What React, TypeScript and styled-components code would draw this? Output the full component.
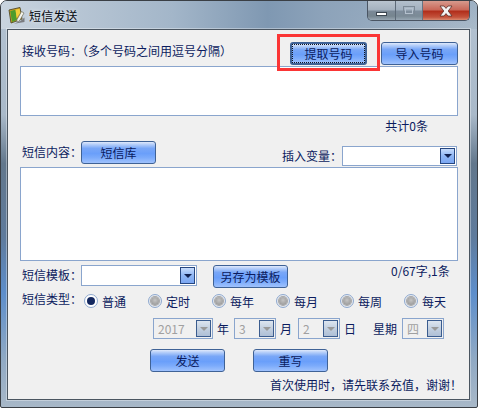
import React from "react";
import styled, { createGlobalStyle } from "styled-components";

const GlobalStyle = createGlobalStyle`
  html, body {
    margin: 0;
    padding: 0;
    background: #fff;
  }
  * {
    box-sizing: border-box;
  }
`;

const Frame = styled.div`
  width: 478px;
  height: 408px;
  display: flex;
  flex-direction: column;
  border: 1px solid #3a3f45;
  border-radius: 7px 7px 2px 2px;
  overflow: hidden;
  font-family: "Noto Sans CJK SC", "Liberation Sans", sans-serif;
  font-size: 12px;
  line-height: 12px;
  color: #0b1b5e;
  background: linear-gradient(
    180deg,
    #b4c3d2 0%,
    #a9b9c9 28%,
    #62778c 40%,
    #5f7b9c 58%,
    #5d8ecb 72%,
    #8fa9c4 88%,
    #a8b8c8 100%
  );
`;

const TitleBar = styled.div`
  height: 28px;
  flex: none;
  display: flex;
  align-items: flex-start;
  padding: 6px 0 0 7px;
  background: linear-gradient(
      90deg,
      #c9d4df 0%,
      #b9c7d5 14%,
      #a3b6c9 36%,
      #7f98b2 56%,
      #8da3ba 68%,
      #82998f00 100%
    ),
    linear-gradient(180deg, #9db0c3 0%, #a9bac9 100%);
`;

const AppIcon = styled.svg`
  width: 17px;
  height: 17px;
  flex: none;
`;

const Title = styled.div`
  margin: 3px 0 0 4px;
  color: #05080f;
  letter-spacing: 0.2px;
  text-shadow: 0 0 4px rgba(255, 255, 255, 0.75);
`;

const Caption = styled.div`
  display: flex;
  height: 20px;
  margin: -6px 7px 0 auto;
  border: 1px solid #4a5563;
  border-top: none;
  border-radius: 0 0 5px 5px;
  overflow: hidden;
`;

const CaptionButton = styled.div<{ $w: number; $close?: boolean; $dim?: boolean }>`
  width: ${({ $w }) => $w}px;
  display: flex;
  align-items: center;
  justify-content: center;
  border-right: 1px solid ${({ $close }) => ($close ? "transparent" : "#5d6a78")};
  opacity: ${({ $dim }) => ($dim ? 0.85 : 1)};
  background: ${({ $close }) =>
    $close
      ? "linear-gradient(180deg, #d79a8d 0%, #c9695a 45%, #b22f1c 55%, #c4533c 85%, #d98a70 100%)"
      : "linear-gradient(180deg, #b9c4cf 0%, #a5b2bf 45%, #7a8896 55%, #76858f 80%, #98a6b2 100%)"};
`;

const MinGlyph = styled.div`
  width: 11px;
  height: 4px;
  margin-top: 7px;
  background: #fff;
  border: 1px solid #3c4650;
`;

const MaxGlyph = styled.div`
  width: 12px;
  height: 10px;
  border: 1px solid #77838f;
  outline: 1px solid #b9c4cf;
  outline-offset: -3px;
`;

const Client = styled.div`
  position: relative;
  flex: 1;
  margin: 0 7px 7px 6px;
  border: 1px solid #4a5560;
  display: flex;
  flex-direction: column;
  padding: 12px 11px 0 12px;
  background: #f0f0f0;
  box-shadow: 0 0 0 1px rgba(255, 255, 255, 0.35);
`;

const Highlight = styled.div`
  position: absolute;
  left: 269px;
  top: 4px;
  width: 103px;
  height: 37px;
  border: 3px solid #fb3535;
`;

const Row = styled.div<{ $h: number; $mt?: number }>`
  display: flex;
  align-items: flex-start;
  flex: none;
  height: ${({ $h }) => $h}px;
  margin-top: ${({ $mt }) => $mt ?? 0}px;
`;

const Label = styled.div<{ $ml?: number; $mt?: number }>`
  flex: none;
  margin-left: ${({ $ml }) => $ml ?? 0}px;
  margin-top: ${({ $mt }) => $mt ?? 0}px;
  white-space: nowrap;
`;

const Push = styled.div`
  flex: 1;
`;

const Button = styled.div<{ $w?: number; $ml?: number; $focus?: boolean }>`
  position: relative;
  flex: none;
  width: ${({ $w }) => $w ?? 75}px;
  height: 23px;
  margin-left: ${({ $ml }) => $ml ?? 0}px;
  display: flex;
  align-items: center;
  justify-content: center;
  border: 1px solid #3f6296;
  border-radius: 3px;
  background: linear-gradient(
    180deg,
    #dfe9fb 0%,
    #b3cdf9 12%,
    #79a7f7 30%,
    #6a9ffa 55%,
    #7cabfb 75%,
    #9fc2fd 100%
  );
  ${({ $focus }) =>
    $focus &&
    `
    border: 2px solid #3f6296;
    &::after {
      content: "";
      position: absolute;
      inset: 0;
      border: 1px dotted #10141f;
    }
  `}
`;

const Field = styled.div<{ $h: number; $mt?: number }>`
  flex: none;
  height: ${({ $h }) => $h}px;
  margin-top: ${({ $mt }) => $mt ?? 0}px;
  background: #fff;
  border: 1px solid #8aa5cd;
`;

const CountLine = styled.div<{ $mt: number; $mr: number }>`
  flex: none;
  height: 12px;
  margin-top: ${({ $mt }) => $mt}px;
  margin-right: ${({ $mr }) => $mr}px;
  text-align: right;
  white-space: nowrap;
`;

const Select = styled.div<{ $w: number; $h: number; $ml?: number; $mt?: number; $off?: boolean }>`
  flex: none;
  display: flex;
  align-items: center;
  justify-content: space-between;
  width: ${({ $w }) => $w}px;
  height: ${({ $h }) => $h}px;
  margin-left: ${({ $ml }) => $ml ?? 0}px;
  margin-top: ${({ $mt }) => $mt ?? 0}px;
  padding: 0 1px 0 4px;
  background: ${({ $off }) => ($off ? "#f0f0f0" : "#fff")};
  color: #a0a0a0;
  border: 1px solid #8aa5cd;
`;

const Arrow = styled.div<{ $off?: boolean }>`
  flex: none;
  width: 15px;
  height: calc(100% - 2px);
  display: flex;
  align-items: center;
  justify-content: center;
  border: 1px solid ${({ $off }) => ($off ? "#3b5c8e" : "#26467f")};
  background: ${({ $off }) =>
    $off
      ? "linear-gradient(180deg, #dde5ef 0%, #c3d0e0 50%, #aebfd6 100%)"
      : "linear-gradient(180deg, #c7dcfb 0%, #8fb6f5 50%, #7ba7f2 100%)"};
  &::after {
    content: "";
    width: 0;
    height: 0;
    border-left: 4px solid transparent;
    border-right: 4px solid transparent;
    border-top: 4px solid ${({ $off }) => ($off ? "#9a9a9a" : "#10204f")};
  }
`;

const RadioGroup = styled.div`
  display: flex;
  margin-left: 2px;
`;

const Radio = styled.div`
  flex: none;
  width: 64px;
  display: flex;
  align-items: center;
  height: 14px;
  gap: 4px;
`;

const RadioText = styled.span`
  padding-top: 2px;
`;

const RadioDot = styled.div<{ $on?: boolean }>`
  flex: none;
  width: 14px;
  height: 14px;
  border-radius: 50%;
  border: 1px solid #8fa9cf;
  display: flex;
  align-items: center;
  justify-content: center;
  background: ${({ $on }) => ($on ? "#fff" : "#e4e8ee")};
  &::after {
    content: "";
    width: 8px;
    height: 8px;
    border-radius: 50%;
    background: ${({ $on }) =>
      $on ? "#14285f" : "radial-gradient(circle at 50% 40%, #c4c4c4, #8f8f8f)"};
    box-shadow: ${({ $on }) => ($on ? "none" : "0 0 0 1px #a8a8a8")};
  }
`;

const kinds = ["定时", "每年", "每月", "每周", "每天"];

// full-width punctuation, as the dialog shows it
const COLON = "\uFF1A";
const COMMA = "\uFF0C";

const BookIcon = () => (
  <AppIcon viewBox="0 0 17 17">
    <path d="M1 3 L12 0.5 L14 12 L3 16 Z" fill="#d9a21e" stroke="#4e4a2a" strokeWidth="0.9" />
    <path d="M2.2 4 L7.5 2.8 L9 13 L4 15 Z" fill="#4f9c2c" />
    <path d="M7.5 2.8 L11.6 1.8 L12.4 6 L8.6 11 Z" fill="#f2cf3a" />
    <path d="M9 12.5 L13.5 4.5 L16 6 L11.4 14 L8.8 15 Z" fill="#f4f4ec" stroke="#6b6b5c" strokeWidth="0.7" />
    <path d="M12.5 14 L16.5 10.5 L16.5 15 L6 16.8 Z" fill="#7a7c80" />
  </AppIcon>
);

export default function App() {
  return (
    <>
      <GlobalStyle />
      <Frame>
        <TitleBar>
          <BookIcon />
          <Title>短信发送</Title>
          <Caption>
            <CaptionButton $w={28}>
              <MinGlyph />
            </CaptionButton>
            <CaptionButton $w={27} $dim>
              <MaxGlyph />
            </CaptionButton>
            <CaptionButton $w={46} $close>
              <svg width="16" height="12" viewBox="0 0 16 12">
                <path
                  d="M2 1 H6 L8 3.4 L10 1 H14 L10.2 6 L14 11 H10 L8 8.6 L6 11 H2 L5.8 6 Z"
                  fill="#f4f4f4"
                  stroke="#59302a"
                  strokeWidth="0.8"
                />
              </svg>
            </CaptionButton>
          </Caption>
        </TitleBar>
        <Client>
          <Row $h={23}>
            <Label $ml={2} $mt={3}>
              {`接收号码${COLON}\uFF08多个号码之间用逗号分隔\uFF09`}
            </Label>
            <Push />
            <Button $w={77} $focus>
              提取号码
            </Button>
            <Button $w={77} $ml={14}>
              导入号码
            </Button>
          </Row>
          <Field $h={50} $mt={1} />
          <CountLine $mt={4} $mr={30}>
            共计0条
          </CountLine>
          <Row $h={26} $mt={9}>
            <Label $ml={2} $mt={5}>
              {`短信内容${COLON}`}
            </Label>
            <Button $ml={-1}>短信库</Button>
            <Label $ml={126} $mt={9}>
              {`插入变量${COLON}`}
            </Label>
            <Select $w={115} $h={20} $mt={5}>
              <span />
              <Arrow />
            </Select>
          </Row>
          <Field $h={94} />
          <Row $h={23} $mt={4}>
            <Label $ml={2} $mt={4}>
              {`短信模板${COLON}`}
            </Label>
            <Select $w={116} $h={21} $ml={-1}>
              <span />
              <Arrow />
            </Select>
            <Button $ml={16}>另存为模板</Button>
            <Label $ml={103}>0/67字,1条</Label>
          </Row>
          <Row $h={14} $mt={6}>
            <Label $ml={2} $mt={-1}>{`短信类型${COLON}`}</Label>
            <RadioGroup>
              <Radio>
                <RadioDot $on />
                <RadioText>普通</RadioText>
              </Radio>
              {kinds.map((kind) => (
                <Radio key={kind}>
                  <RadioDot />
                  <RadioText>{kind}</RadioText>
                </Radio>
              ))}
            </RadioGroup>
          </Row>
          <Row $h={21} $mt={10}>
            <Select $w={60} $h={21} $ml={133} $off>
              2017
              <Arrow $off />
            </Select>
            <Label $ml={4} $mt={5}>
              年
            </Label>
            <Select $w={42} $h={21} $ml={5} $off>
              3
              <Arrow $off />
            </Select>
            <Label $ml={4} $mt={5}>
              月
            </Label>
            <Select $w={42} $h={21} $ml={6} $off>
              2
              <Arrow $off />
            </Select>
            <Label $ml={4} $mt={5}>
              日
            </Label>
            <Label $ml={17} $mt={5}>
              星期
            </Label>
            <Select $w={42} $h={21} $ml={5} $off>
              四
              <Arrow $off />
            </Select>
          </Row>
          <Row $h={23} $mt={10}>
            <Button $ml={130}>发送</Button>
            <Button $ml={28}>重写</Button>
          </Row>
          <CountLine $mt={7} $mr={-4}>
            {`首次使用时${COMMA}请先联系充值${COMMA}谢谢\uFF01`}
          </CountLine>
          <Highlight />
        </Client>
      </Frame>
    </>
  );
}
